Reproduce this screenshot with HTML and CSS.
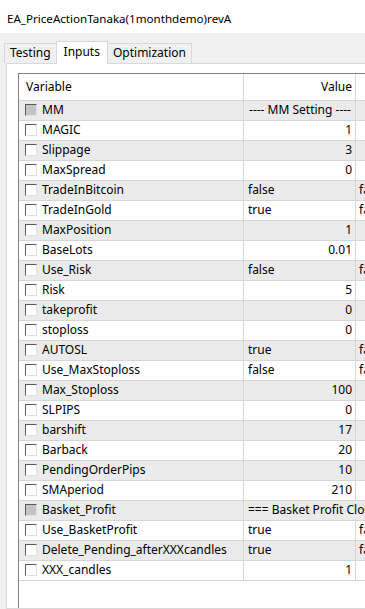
FILE: index.html
```html
<!DOCTYPE html>
<html lang="en">

<head>
    <meta charset="UTF-8">
    <meta name="viewport" content="width=device-width, initial-scale=1.0">
    <title>EA_PriceActionTanaka(1monthdemo)revA</title>
    <link rel="stylesheet" href="styles.css">
</head>

<body>
    <div class="title">EA_PriceActionTanaka(1monthdemo)revA</div>

    <section class="window">
        <nav class="tabs">
            <span class="tab">Testing</span>
            <span class="tab active">Inputs</span>
            <span class="tab">Optimization</span>
        </nav>

        <article class="panel">
            <div class="grid">
                <div class="row head">
                    <div class="name">Variable</div>
                    <div class="val num">Value</div>
                    <div class="extra"></div>
                </div>

                <div class="row alt">
                    <div class="name"><i class="box on"></i>MM</div>
                    <div class="val center">---- MM Setting ----</div>
                    <div class="extra"></div>
                </div>
                <div class="row">
                    <div class="name"><i class="box"></i>MAGIC</div>
                    <div class="val num">1</div>
                    <div class="extra"></div>
                </div>
                <div class="row alt">
                    <div class="name"><i class="box"></i>Slippage</div>
                    <div class="val num">3</div>
                    <div class="extra"></div>
                </div>
                <div class="row">
                    <div class="name"><i class="box"></i>MaxSpread</div>
                    <div class="val num">0</div>
                    <div class="extra"></div>
                </div>
                <div class="row alt">
                    <div class="name"><i class="box"></i>TradeInBitcoin</div>
                    <div class="val">false</div>
                    <div class="extra">fa</div>
                </div>
                <div class="row">
                    <div class="name"><i class="box"></i>TradeInGold</div>
                    <div class="val">true</div>
                    <div class="extra">fa</div>
                </div>
                <div class="row alt">
                    <div class="name"><i class="box"></i>MaxPosition</div>
                    <div class="val num">1</div>
                    <div class="extra"></div>
                </div>
                <div class="row">
                    <div class="name"><i class="box"></i>BaseLots</div>
                    <div class="val num">0.01</div>
                    <div class="extra"></div>
                </div>
                <div class="row alt">
                    <div class="name"><i class="box"></i>Use_Risk</div>
                    <div class="val">false</div>
                    <div class="extra">fa</div>
                </div>
                <div class="row">
                    <div class="name"><i class="box"></i>Risk</div>
                    <div class="val num">5</div>
                    <div class="extra"></div>
                </div>
                <div class="row alt">
                    <div class="name"><i class="box"></i>takeprofit</div>
                    <div class="val num">0</div>
                    <div class="extra"></div>
                </div>
                <div class="row">
                    <div class="name"><i class="box"></i>stoploss</div>
                    <div class="val num">0</div>
                    <div class="extra"></div>
                </div>
                <div class="row alt">
                    <div class="name"><i class="box"></i>AUTOSL</div>
                    <div class="val">true</div>
                    <div class="extra">fa</div>
                </div>
                <div class="row">
                    <div class="name"><i class="box"></i>Use_MaxStoploss</div>
                    <div class="val">false</div>
                    <div class="extra">fa</div>
                </div>
                <div class="row alt">
                    <div class="name"><i class="box"></i>Max_Stoploss</div>
                    <div class="val num">100</div>
                    <div class="extra"></div>
                </div>
                <div class="row">
                    <div class="name"><i class="box"></i>SLPIPS</div>
                    <div class="val num">0</div>
                    <div class="extra"></div>
                </div>
                <div class="row alt">
                    <div class="name"><i class="box"></i>barshift</div>
                    <div class="val num">17</div>
                    <div class="extra"></div>
                </div>
                <div class="row">
                    <div class="name"><i class="box"></i>Barback</div>
                    <div class="val num">20</div>
                    <div class="extra"></div>
                </div>
                <div class="row alt">
                    <div class="name"><i class="box"></i>PendingOrderPips</div>
                    <div class="val num">10</div>
                    <div class="extra"></div>
                </div>
                <div class="row">
                    <div class="name"><i class="box"></i>SMAperiod</div>
                    <div class="val num">210</div>
                    <div class="extra"></div>
                </div>
                <div class="row alt">
                    <div class="name"><i class="box on"></i>Basket_Profit</div>
                    <div class="val wide">=== Basket Profit Clos</div>
                </div>
                <div class="row">
                    <div class="name"><i class="box"></i>Use_BasketProfit</div>
                    <div class="val">true</div>
                    <div class="extra">fa</div>
                </div>
                <div class="row alt">
                    <div class="name"><i class="box"></i>Delete_Pending_afterXXXcandles</div>
                    <div class="val">true</div>
                    <div class="extra">fa</div>
                </div>
                <div class="row">
                    <div class="name"><i class="box"></i>XXX_candles</div>
                    <div class="val num">1</div>
                    <div class="extra"></div>
                </div>
            </div>
        </article>
    </section>
</body>

</html>
```

FILE: styles.css
```css
html,
body {
    margin: 0;
    height: 100%;
    overflow: hidden;
}

body {
    font-family: 'Noto Sans', 'Open Sans', sans-serif;
    font-size: 12px;
    color: #000;
    background-color: #f0f0f0;
    display: flex;
    flex-direction: column;
}

.title {
    height: 33px;
    line-height: 37px;
    padding-left: 7px;
    font-size: 11.6px;
    background-color: #fff;
    white-space: nowrap;
}

.window {
    flex: 1;
    display: flex;
    flex-direction: column;
    padding-top: 9px;
}

.tabs {
    display: flex;
    align-items: flex-end;
    padding-left: 4px;
    height: 21px;
}

.tab {
    height: 19px;
    line-height: 18px;
    padding: 0 5px;
    border: 1px solid #d9d9d9;
    border-bottom: none;
    background-color: #f0f0f0;
    margin-right: -1px;
}

.tab.active {
    height: 22px;
    line-height: 19px;
    background-color: #fff;
    position: relative;
    z-index: 1;
    margin-bottom: -1px;
    padding: 0 7px;
}

.panel {
    flex: 1;
    margin-left: 6px;
    margin-right: -20px;
    background-color: #fff;
    border: 1px solid #d9d9d9;
    padding: 9px 0 0 11px;
    display: flex;
}

.grid {
    flex: 1;
    border-left: 1px solid #828282;
    border-top: 1px solid #828282;
}

.row {
    display: flex;
    height: 19px;
    line-height: 17px;
    border-bottom: 1px solid #d6d6d6;
    white-space: nowrap;
}

.row.head {
    height: 26px;
    line-height: 26px;
}

.row.alt {
    background-color: #ebebeb;
}

.name,
.val,
.extra {
    display: flex;
    align-items: center;
    box-sizing: border-box;
    padding-bottom: 2px;
    overflow: hidden;
}

.head .name,
.head .val {
    padding-bottom: 0;
}

.name {
    width: 225px;
    padding-left: 6px;
    border-right: 1px solid #d6d6d6;
}

.head .name {
    padding-left: 7px;
}

.val {
    width: 112px;
    padding-left: 4px;
    padding-right: 3px;
    border-right: 1px solid #d6d6d6;
}

.val.num {
    justify-content: flex-end;
}

.val.center {
    justify-content: center;
}

.val.wide {
    width: 150px;
    border-right: none;
}

.extra {
    padding-left: 3px;
}

.box {
    width: 10px;
    height: 10px;
    margin-right: 5px;
    margin-top: 1px;
    border-top: 1px solid #5a5a5a;
    border-left: 1px solid #5a5a5a;
    border-right: 1px solid #e2e2e2;
    border-bottom: 1px solid #e2e2e2;
    background-color: #fff;
    flex-shrink: 0;
}

.box.on {
    background-color: #c4c4c4;
}
```
